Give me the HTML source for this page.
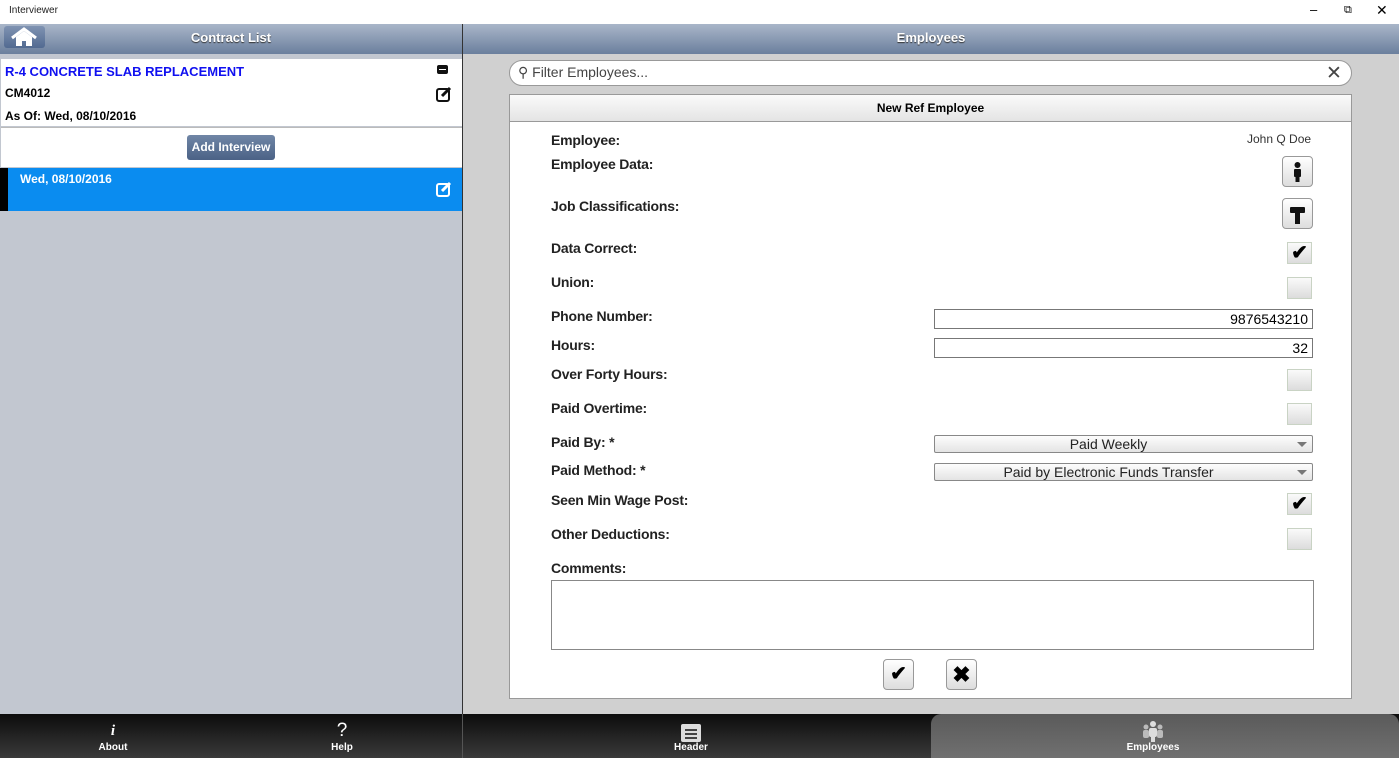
<!DOCTYPE html><html><head><style>
*{margin:0;padding:0;box-sizing:border-box}
body{width:1399px;height:758px;overflow:hidden;font-family:"Liberation Sans",Arial,sans-serif;background:#fff;position:relative}
.a{position:absolute}
.hdr{background:linear-gradient(#a9b6c9,#6b7f9d);color:#fff;font-weight:bold;font-size:13px;text-align:center;line-height:28px;text-shadow:0 1px 1px #333}
.lbl{position:absolute;left:551px;font-weight:bold;font-size:14px;color:#222;transform:translateY(-50%);letter-spacing:-0.2px}
.cb{position:absolute;left:1287px;width:25px;height:22px;border:1px solid #c9d3c4;background:linear-gradient(#fafafa,#dcdcdc);text-align:center;font-size:20px;line-height:20px;font-weight:bold}
.inp{position:absolute;left:934px;width:379px;height:20px;border:1px solid #777;background:#fff;text-align:right;padding-right:4px;font-size:14px;line-height:18px}
.sel{position:absolute;left:934px;width:379px;height:18px;border:1px solid #888;border-radius:2px;background:linear-gradient(#fdfdfd,#e4e4e4);text-align:center;padding-right:30px;font-size:14px;line-height:16px;color:#222}
.sel:after{content:"";position:absolute;right:5px;top:6px;border:5px solid transparent;border-top:5px solid #777}
.ib{position:absolute;width:31px;height:31px;border:1px solid #999;border-radius:4px;background:linear-gradient(#fff,#ddd)}
.tab{position:absolute;top:714px;height:44px;color:#fff;font-size:10px;font-weight:bold;text-align:center}
</style></head><body>
<div class="a" style="left:9px;top:5px;font-size:10px;color:#222">Interviewer</div>
<div class="a" style="left:1310px;top:2px;font-size:13px">&#8211;</div>
<div class="a" style="left:1344px;top:4px;font-size:11px">&#10697;</div>
<div class="a" style="left:1376px;top:2px;font-size:14px">&#10005;</div>
<div class="a" style="left:0;top:24px;width:462px;height:690px;background:#c2c7d0"></div>
<div class="a hdr" style="left:0;top:24px;width:462px;height:30px;line-height:28px">Contract List</div>
<div class="a" style="left:4px;top:26px;width:41px;height:22px;border-radius:3px;background:linear-gradient(#7f93b2,#526a91)">
<svg width="41" height="22" viewBox="0 0 41 22"><path d="M8 12 L20 3 L32 12" stroke="#fff" stroke-width="3" fill="none"/><path d="M12 11 V20 H18 V15 H22 V20 H28 V11 L20 5Z" fill="#fff"/></svg></div>
<div class="a" style="left:1px;top:59px;width:461px;height:67px;background:#fff"></div>
<div class="a" style="left:5px;top:64px;font-size:13px;font-weight:bold;color:#1010f0">R-4 CONCRETE SLAB REPLACEMENT</div>
<div class="a" style="left:5px;top:86px;font-size:12px;font-weight:bold">CM4012</div>
<div class="a" style="left:5px;top:109px;font-size:12px;font-weight:bold">As Of: Wed, 08/10/2016</div>
<div class="a" style="left:437px;top:65px;width:11px;height:9px;background:#111;border-radius:2px"><div style="margin:4px 2px;height:1px;background:#fff"></div></div>
<svg class="a" style="left:436px;top:86px" width="16" height="16"><rect x="1" y="3" width="12" height="12" rx="2" fill="none" stroke="#111" stroke-width="2"/><path d="M6 10 L14 2" stroke="#111" stroke-width="3"/></svg>
<div class="a" style="left:1px;top:127px;width:461px;height:40px;background:#fff;border-top:1px solid #bbb"></div>
<div class="a" style="left:187px;top:135px;width:88px;height:25px;border-radius:3px;background:linear-gradient(#7086a6,#4b6286);color:#fff;font-weight:bold;font-size:12px;text-align:center;line-height:25px">Add Interview</div>
<div class="a" style="left:0;top:168px;width:462px;height:43px;background:#0a8cf0;border-left:8px solid #000"></div>
<div class="a" style="left:20px;top:172px;font-size:12px;font-weight:bold;color:#fff">Wed, 08/10/2016</div>
<svg class="a" style="left:436px;top:181px" width="16" height="16"><rect x="1" y="3" width="12" height="12" rx="2" fill="none" stroke="#fff" stroke-width="2"/><path d="M6 10 L14 2" stroke="#fff" stroke-width="3"/></svg>
<div class="a" style="left:462px;top:24px;width:1px;height:690px;background:#333"></div>
<div class="a" style="left:463px;top:24px;width:936px;height:690px;background:#d0d0d0"></div>
<div class="a hdr" style="left:463px;top:24px;width:936px;height:30px">Employees</div>
<div class="a" style="left:509px;top:60px;width:843px;height:26px;border:1px solid #999;border-radius:13px;background:#fff"></div>
<div class="a" style="left:518px;top:64px;font-size:14px;color:#444">&#9906; Filter Employees...</div>
<div class="a" style="left:1326px;top:62px;font-size:19px;color:#444">&#10005;</div>
<div class="a" style="left:509px;top:94px;width:843px;height:605px;border:1px solid #999;background:#fff"></div>
<div class="a" style="left:510px;top:95px;width:841px;height:27px;border-bottom:1px solid #999;background:linear-gradient(#fafafa,#e4e4e4);text-align:center;font-size:12px;font-weight:bold;line-height:26px">New Ref Employee</div>
<div class="lbl" style="top:140px">Employee:</div>
<div class="a" style="left:1247px;top:132px;font-size:12px;color:#333">John Q Doe</div>
<div class="lbl" style="top:164px">Employee Data:</div>
<div class="ib" style="left:1282px;top:156px"><svg width="29" height="29"><circle cx="14.5" cy="8" r="3" fill="#111"/><rect x="11" y="12" width="7" height="8" rx="1" fill="#111"/><rect x="12.5" y="19" width="4" height="6" fill="#111"/></svg></div>
<div class="lbl" style="top:206px">Job Classifications:</div>
<div class="ib" style="left:1282px;top:198px"><svg width="29" height="29"><rect x="7" y="8" width="15" height="6" rx="1" fill="#111"/><rect x="12" y="12" width="5" height="13" fill="#111"/></svg></div>
<div class="lbl" style="top:248px">Data Correct:</div><div class="cb" style="top:242px">&#10004;</div>
<div class="lbl" style="top:282px">Union:</div><div class="cb" style="top:277px"></div>
<div class="lbl" style="top:316px">Phone Number:</div><div class="inp" style="top:309px">9876543210</div>
<div class="lbl" style="top:345px">Hours:</div><div class="inp" style="top:338px">32</div>
<div class="lbl" style="top:374px">Over Forty Hours:</div><div class="cb" style="top:369px"></div>
<div class="lbl" style="top:408px">Paid Overtime:</div><div class="cb" style="top:403px"></div>
<div class="lbl" style="top:442px">Paid By: *</div><div class="sel" style="top:435px">Paid Weekly</div>
<div class="lbl" style="top:470px">Paid Method: *</div><div class="sel" style="top:463px">Paid by Electronic Funds Transfer</div>
<div class="lbl" style="top:500px">Seen Min Wage Post:</div><div class="cb" style="top:493px">&#10004;</div>
<div class="lbl" style="top:534px">Other Deductions:</div><div class="cb" style="top:528px"></div>
<div class="lbl" style="top:568px">Comments:</div>
<div class="a" style="left:551px;top:580px;width:763px;height:70px;border:1px solid #888;background:#fff"></div>
<div class="ib" style="left:883px;top:659px;text-align:center;font-size:20px;line-height:29px;font-weight:bold">&#10004;</div>
<div class="ib" style="left:946px;top:659px;text-align:center;font-size:22px;line-height:29px;font-weight:bold">&#10006;</div>
<div class="a" style="left:0;top:714px;width:1399px;height:44px;background:linear-gradient(#0c0c0c,#3a3a3a)"></div>
<div class="a" style="left:462px;top:714px;width:1px;height:44px;background:#555"></div>
<div class="a" style="left:931px;top:714px;width:468px;height:44px;border-radius:10px 10px 0 0;background:linear-gradient(#5a5a5a,#707070)"></div>
<div class="tab" style="left:83px;width:60px"><div style="font-size:15px;font-style:italic;font-family:'Liberation Serif';height:28px;line-height:34px">i</div>About</div>
<div class="tab" style="left:312px;width:60px"><div style="font-size:19px;font-weight:normal;height:28px;line-height:34px">?</div>Help</div>
<div class="tab" style="left:661px;width:60px"><div style="height:28px;padding-top:8px"><svg width="22" height="20"><rect x="1" y="2" width="20" height="18" rx="2" fill="#ddd"/><path d="M5 8h12M5 12h12M5 16h12" stroke="#444" stroke-width="2"/></svg></div>Header</div>
<div class="tab" style="left:1123px;width:60px"><div style="height:28px;padding-top:6px"><svg width="22" height="22"><circle cx="11" cy="4" r="3" fill="#ddd"/><rect x="7" y="8" width="8" height="9" rx="2" fill="#ddd"/><rect x="9" y="15" width="4" height="7" fill="#ddd"/><circle cx="4" cy="7" r="2.5" fill="#bbb"/><circle cx="18" cy="7" r="2.5" fill="#bbb"/><rect x="1" y="10" width="6" height="8" rx="2" fill="#bbb"/><rect x="15" y="10" width="6" height="8" rx="2" fill="#bbb"/></svg></div>Employees</div>
</body></html>
